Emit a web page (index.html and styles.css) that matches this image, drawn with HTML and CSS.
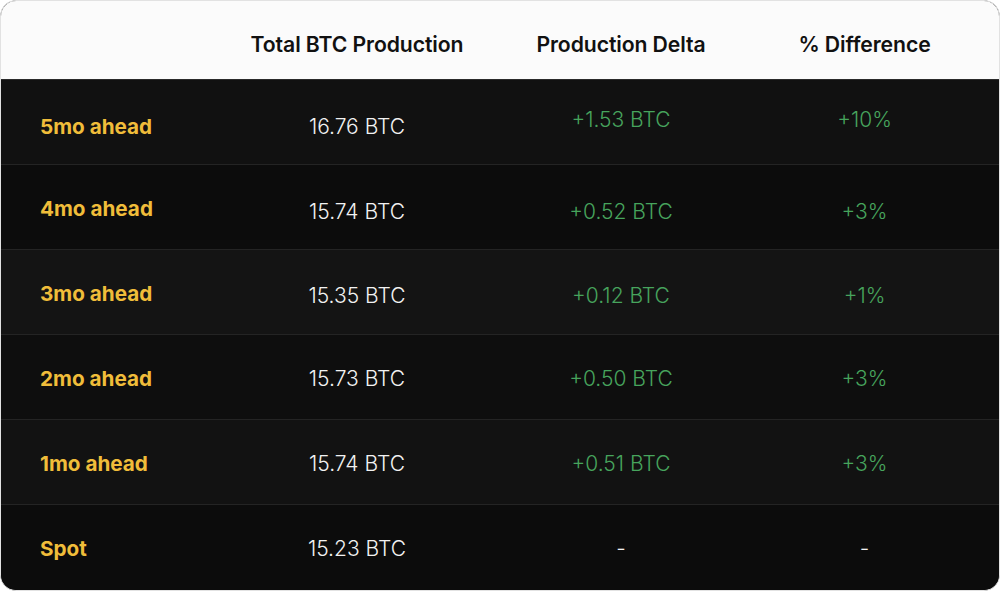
FILE: index.html
```html
<!DOCTYPE html>
<html lang="en">
<head>
<meta charset="utf-8">
<title>BTC Production Forecast</title>
<link rel="stylesheet" href="styles.css">
</head>
<body>
<div class="card">
  <div class="head">
    <div class="hcell"></div>
    <div class="hcell">Total BTC Production</div>
    <div class="hcell">Production Delta</div>
    <div class="hcell">% Difference</div>
  </div>
  <div class="body">
    <div class="row r1">
      <div class="cell label low">5mo ahead</div>
      <div class="cell val low">16.76 BTC</div>
      <div class="cell pos high">+1.53 BTC</div>
      <div class="cell pos high">+10%</div>
    </div>
    <div class="row r2">
      <div class="cell label">4mo ahead</div>
      <div class="cell val low">15.74 BTC</div>
      <div class="cell pos low">+0.52 BTC</div>
      <div class="cell pos low">+3%</div>
    </div>
    <div class="row r1">
      <div class="cell label">3mo ahead</div>
      <div class="cell val mid">15.35 BTC</div>
      <div class="cell pos mid">+0.12 BTC</div>
      <div class="cell pos mid">+1%</div>
    </div>
    <div class="row r2">
      <div class="cell label">2mo ahead</div>
      <div class="cell val">15.73 BTC</div>
      <div class="cell pos">+0.50 BTC</div>
      <div class="cell pos">+3%</div>
    </div>
    <div class="row r1">
      <div class="cell label">1mo ahead</div>
      <div class="cell val">15.74 BTC</div>
      <div class="cell pos">+0.51 BTC</div>
      <div class="cell pos">+3%</div>
    </div>
    <div class="row r2 last">
      <div class="cell label">Spot</div>
      <div class="cell val">15.23 BTC</div>
      <div class="cell val">-</div>
      <div class="cell val">-</div>
    </div>
  </div>
</div>
</body>
</html>
```

FILE: styles.css
```css
html, body {
  margin: 0;
  padding: 0;
  background: #ffffff;
}
body {
  font-family: Inter, "Liberation Sans", sans-serif;
  width: 1000px;
  height: 591px;
}
.card {
  box-sizing: border-box;
  width: 1000px;
  height: 591px;
  border: 1px solid #e2e2e2;
  border-radius: 16px;
  overflow: hidden;
  display: flex;
  flex-direction: column;
  background: #0e0e0e;
}
.head, .row {
  display: grid;
  grid-template-columns: 201px 310px 218px 1fr;
}
.head {
  height: 78px;
  background: #fbfbfb;
  border-bottom: 1px solid #2a2a2a;
  flex: none;
}
.hcell {
  display: flex;
  align-items: center;
  justify-content: center;
  font-size: 21.2px;
  font-weight: 620;
  color: #111111;
  letter-spacing: -0.1px;
  padding-top: 7px;
}
.body {
  flex: 1;
  display: grid;
  grid-template-rows: repeat(6, 1fr);
}
.row {
  border-bottom: 1px solid #242424;
}
.row.last {
  border-bottom: none;
}
.r1 { background: #111111; }
.r2 { background: #0c0c0c; }
.row:nth-child(3) { background: #141414; }
.row:nth-child(4) { background: #0e0e0e; }
.row:nth-child(5) { background: #121212; }
.cell {
  display: flex;
  align-items: center;
  justify-content: center;
  font-size: 21px;
  font-weight: 300;
  padding-top: 2px;
}
.cell.low { padding-top: 9px; }
.cell.mid { padding-top: 7px; }
.cell.high { padding-top: 0; padding-bottom: 5px; }
.label {
  justify-content: flex-start;
  padding-left: 39px;
  font-size: 20.7px;
  font-weight: 700;
  color: #f0bd3a;
}
.val { color: #f2f2f2; }
.pos { color: #47a45d; }
```
